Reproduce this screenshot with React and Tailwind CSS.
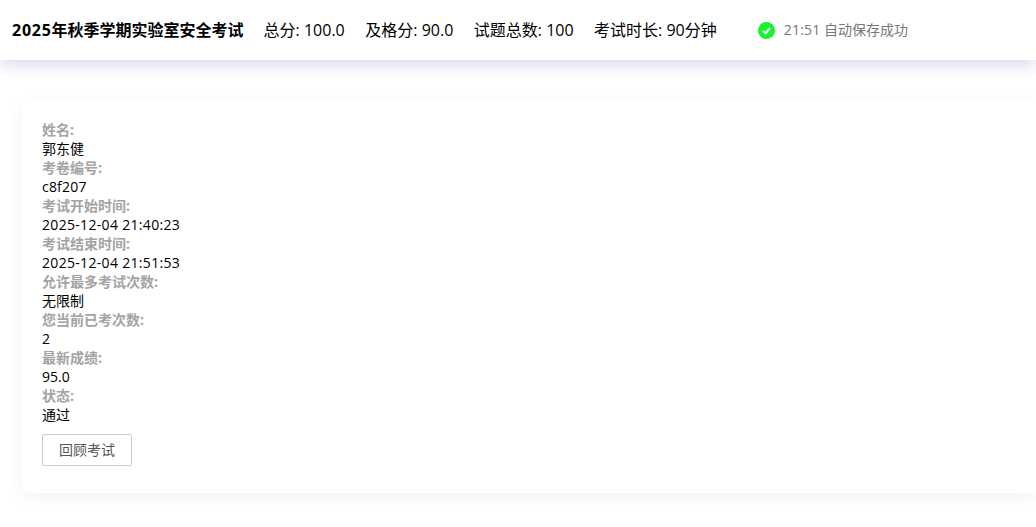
const fields = [
  { label: '姓名:', value: '郭东健', valueClass: '' },
  { label: '考卷编号:', value: 'c8f207', valueClass: 'tracking-[0.2px]' },
  { label: '考试开始时间:', value: '2025-12-04 21:40:23', valueClass: 'tracking-[0.32px]' },
  { label: '考试结束时间:', value: '2025-12-04 21:51:53', valueClass: 'tracking-[0.32px]' },
  { label: '允许最多考试次数:', value: '无限制', valueClass: '' },
  { label: '您当前已考次数:', value: '2', valueClass: '' },
  { label: '最新成绩:', value: '95.0', valueClass: '' },
  { label: '状态:', value: '通过', valueClass: '' },
];

const stats = ['总分: 100.0', '及格分: 90.0', '试题总数: 100', '考试时长: 90分钟'];

export default function App() {
  return (
    <div className="h-[527px] w-[1036px] overflow-hidden bg-white text-black font-['Open_Sans','Noto_Sans_CJK_SC',sans-serif]">
      {/* Header */}
      <header className="flex h-[60px] items-center bg-white pl-3 shadow-[0_4px_16px_0_#d3d8e8]">
        <h1 className="text-base font-bold">
          <span className="tracking-[0.75px]">2025</span>年秋季学期实验室安全考试
        </h1>
        <div className="ml-5 flex gap-[20.5px] text-base">
          {stats.map((item) => (
            <span key={item}>{item}</span>
          ))}
        </div>
        <div className="ml-[41px] flex items-center gap-[9px] text-sm text-[#777]">
          <span className="flex h-[17px] w-[17px] items-center justify-center rounded-full bg-[#14f52e]">
            <svg viewBox="0 0 17 17" className="h-[17px] w-[17px]" fill="none" stroke="#fff" strokeWidth="2">
              <path d="M4.8 8.7 7.5 11.3 12 6" />
            </svg>
          </span>
          <span>
            <span className="tracking-[0.2px]">21:51</span> 自动保存成功
          </span>
        </div>
      </header>

      {/* Result card */}
      <main className="pt-10 pl-[22px]">
        <section className="h-[393px] rounded-l-md bg-white pt-5 pl-5 shadow-[0_4px_16px_0_#f2f3f8]">
          {fields.map((f) => (
            <div key={f.label} className="text-sm leading-[19px]">
              <div className="font-bold text-[#a3a3a3]">{f.label}</div>
              <div className={f.valueClass}>{f.value}</div>
            </div>
          ))}
          <button className="mt-2.5 h-8 w-[90px] rounded-[2px] border border-[#ccc] bg-white text-sm text-[#555]">
            回顾考试
          </button>
        </section>
      </main>
    </div>
  );
}
